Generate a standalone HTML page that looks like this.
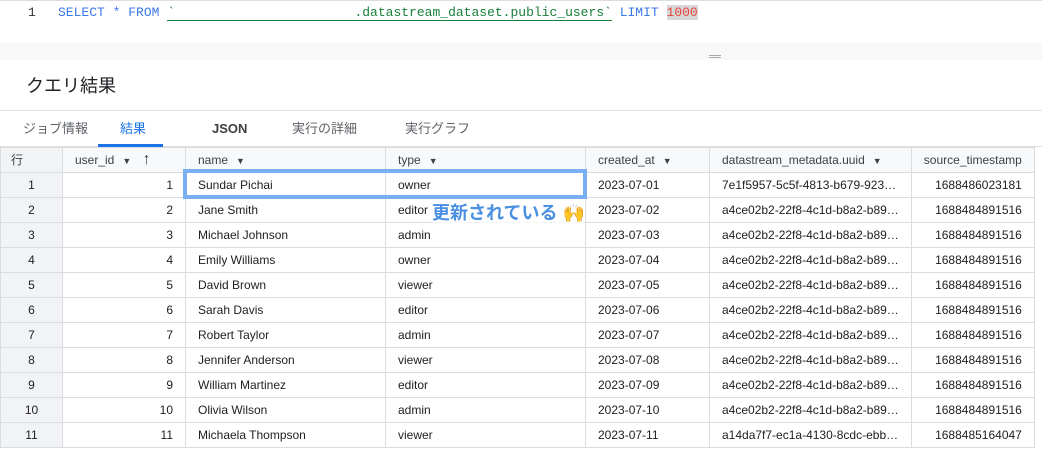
<!DOCTYPE html>
<html><head><meta charset="utf-8"><style>
*{margin:0;padding:0;box-sizing:border-box}
body{width:1042px;height:466px;background:#fff;font-family:"Liberation Sans","Noto Sans CJK JP",sans-serif;position:relative;overflow:hidden;color:#202124}
.ed{position:absolute;left:0;top:0;width:1042px;height:60px;background:#f8f8f8;border-top:1px solid #ddd}
.code{position:absolute;left:0;top:0;width:1042px;height:41px;background:#fff}
.ln{position:absolute;left:28px;top:4px;font:13px "Liberation Mono",monospace;color:#333}
.src{position:absolute;left:58px;top:4px;font:13px "Liberation Mono",monospace;color:#3b78e7;white-space:pre}
.g{color:#188038;border-bottom:1px solid #188038}
.n{color:#e8453c;background:#d7d7d7}
.handle{position:absolute;left:709px;top:54px;width:12px;height:3px;border-top:1px solid #aaa;border-bottom:1px solid #aaa}
.title{position:absolute;left:26px;top:75px;font-size:18px;line-height:22px;color:#202124}
.tabs{position:absolute;left:0;top:110px;width:1042px;height:37px;border-top:1px solid #e0e0e0;border-bottom:1px solid #e0e0e0}
.tab{position:absolute;top:10px;font-size:13px;line-height:16px;height:16px;color:#5f6368}
.ul{position:absolute;left:98px;top:33px;width:65px;height:3px;background:#1a73e8}
table{position:absolute;left:0;top:147px;border-collapse:collapse;font-size:12px;table-layout:fixed}
td,th{height:25px;border:1px solid #dadce0;padding:0 12px;white-space:nowrap;overflow:hidden;font-weight:normal;line-height:14px}
th{background:#f8f9fa;text-align:left;color:#3c4043;font-size:12px}
th.r0{background:#f1f3f4}
td.r{background:#f1f3f4;text-align:center;padding:0}
td.num{text-align:right}
.tri{font-size:9px;margin-left:8px}
.box{position:absolute;left:183px;top:169px;width:404px;height:30px;border:4px solid #7aaef5}
.note{position:absolute;left:432px;top:201px;font-size:18px;line-height:24px;font-weight:bold;color:#4a90e2;background:rgba(255,255,255,.7)}
</style></head><body>
<div class="ed"><div class="code"></div><div class="ln">1</div>
<div class="src">SELECT * FROM <span class="g">`                       .datastream_dataset.public_users`</span> LIMIT <span class="n">1000</span></div>
<div class="handle"></div></div>
<div class="title">クエリ結果</div>
<div class="tabs">
<span class="tab" style="left:23px">ジョブ情報</span>
<span class="tab" style="left:120px;color:#1a73e8">結果</span>
<span class="tab" style="left:212px;color:#3c4043;font-weight:bold">JSON</span>
<span class="tab" style="left:292px">実行の詳細</span>
<span class="tab" style="left:405px">実行グラフ</span>
<div class="ul"></div></div>
<table>
<colgroup><col style="width:62px"><col style="width:123px"><col style="width:200px"><col style="width:200px"><col style="width:124px"><col style="width:200px"><col style="width:123px"></colgroup>
<tr><th class="r0" style="padding-left:10px">行</th><th>user_id<span class="tri">▼</span> <b style="font-size:16px;margin-left:8px">↑</b></th><th>name<span class="tri">▼</span></th><th>type<span class="tri">▼</span></th><th>created_at<span class="tri">▼</span></th><th>datastream_metadata.uuid<span class="tri">▼</span></th><th>source_timestamp</th></tr>
<tr><td class="r">1</td><td class="num">1</td><td>Sundar Pichai</td><td>owner</td><td>2023-07-01</td><td>7e1f5957-5c5f-4813-b679-923…</td><td class="num">1688486023181</td></tr>
<tr><td class="r">2</td><td class="num">2</td><td>Jane Smith</td><td>editor</td><td>2023-07-02</td><td>a4ce02b2-22f8-4c1d-b8a2-b89…</td><td class="num">1688484891516</td></tr>
<tr><td class="r">3</td><td class="num">3</td><td>Michael Johnson</td><td>admin</td><td>2023-07-03</td><td>a4ce02b2-22f8-4c1d-b8a2-b89…</td><td class="num">1688484891516</td></tr>
<tr><td class="r">4</td><td class="num">4</td><td>Emily Williams</td><td>owner</td><td>2023-07-04</td><td>a4ce02b2-22f8-4c1d-b8a2-b89…</td><td class="num">1688484891516</td></tr>
<tr><td class="r">5</td><td class="num">5</td><td>David Brown</td><td>viewer</td><td>2023-07-05</td><td>a4ce02b2-22f8-4c1d-b8a2-b89…</td><td class="num">1688484891516</td></tr>
<tr><td class="r">6</td><td class="num">6</td><td>Sarah Davis</td><td>editor</td><td>2023-07-06</td><td>a4ce02b2-22f8-4c1d-b8a2-b89…</td><td class="num">1688484891516</td></tr>
<tr><td class="r">7</td><td class="num">7</td><td>Robert Taylor</td><td>admin</td><td>2023-07-07</td><td>a4ce02b2-22f8-4c1d-b8a2-b89…</td><td class="num">1688484891516</td></tr>
<tr><td class="r">8</td><td class="num">8</td><td>Jennifer Anderson</td><td>viewer</td><td>2023-07-08</td><td>a4ce02b2-22f8-4c1d-b8a2-b89…</td><td class="num">1688484891516</td></tr>
<tr><td class="r">9</td><td class="num">9</td><td>William Martinez</td><td>editor</td><td>2023-07-09</td><td>a4ce02b2-22f8-4c1d-b8a2-b89…</td><td class="num">1688484891516</td></tr>
<tr><td class="r">10</td><td class="num">10</td><td>Olivia Wilson</td><td>admin</td><td>2023-07-10</td><td>a4ce02b2-22f8-4c1d-b8a2-b89…</td><td class="num">1688484891516</td></tr>
<tr><td class="r">11</td><td class="num">11</td><td>Michaela Thompson</td><td>viewer</td><td>2023-07-11</td><td>a14da7f7-ec1a-4130-8cdc-ebb…</td><td class="num">1688485164047</td></tr>
</table>
<div class="box"></div>
<div class="note">更新されている <span style="color:#f5b400">🙌</span></div>
</body></html>
